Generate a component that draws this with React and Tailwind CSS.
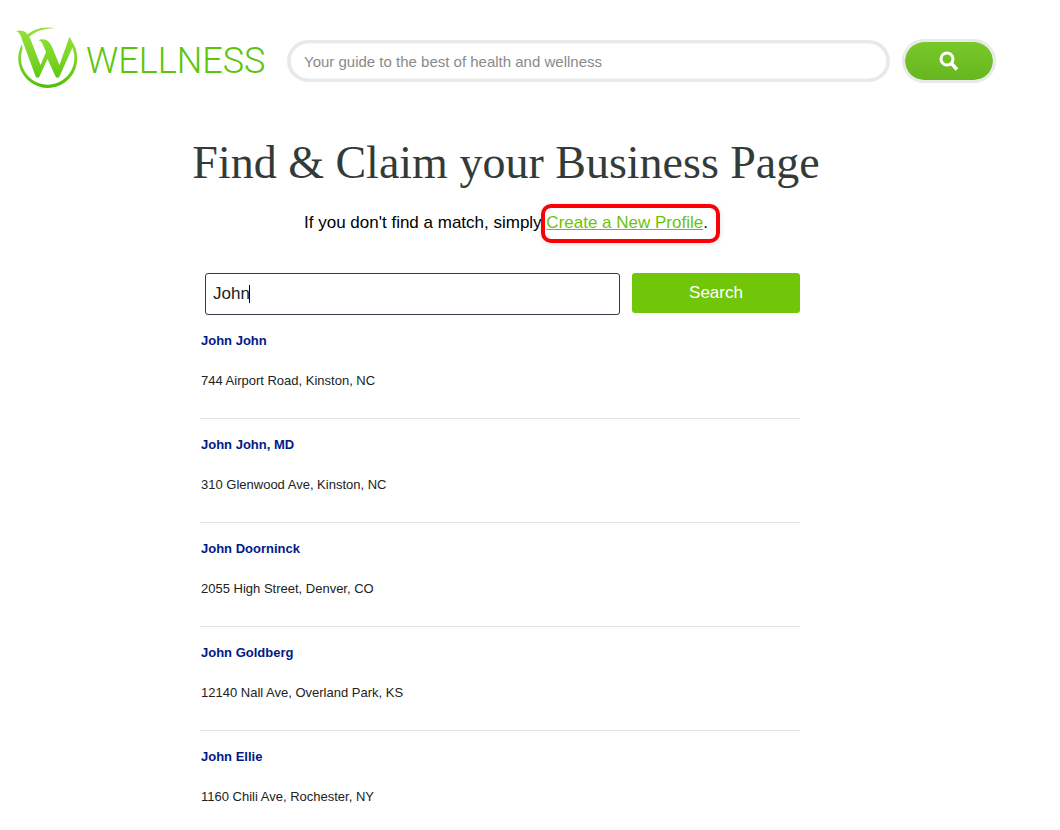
import React, { useState } from "react";

const businesses = [
  { id: 1, name: "John John", address: "744 Airport Road, Kinston, NC" },
  { id: 2, name: "John John, MD", address: "310 Glenwood Ave, Kinston, NC" },
  { id: 3, name: "John Doorninck", address: "2055 High Street, Denver, CO" },
  { id: 4, name: "John Goldberg", address: "12140 Nall Ave, Overland Park, KS" },
  { id: 5, name: "John Ellie", address: "1160 Chili Ave, Rochester, NY" },
];

function Logo() {
  return (
    <a href="#" className="flex w-[247px] shrink-0 items-center gap-2 text-[#5cc50a]">
      <svg className="h-[62px] w-[62px] shrink-0" viewBox="0 0 62 62" aria-hidden="true">
        <defs>
          <linearGradient id="leaf" gradientUnits="userSpaceOnUse" x1="0" y1="0" x2="0" y2="62">
            <stop offset="0" stopColor="#95e23c" />
            <stop offset="0.5" stopColor="#7cd628" />
            <stop offset="1" stopColor="#52bf08" />
          </linearGradient>
        </defs>
        <g fill="url(#leaf)">
          {/* thin stroke over the top, then the thicker ring below */}
          <path d="M11 9 C18 3 28 0 39 2.5 C29 2 20 4.500 13 11 Z" />
          <path d="M6 18 A29.5 29.5 0 1 0 54 13 L56 21 A26.7 26.7 0 1 1 6.5 23 Z" />
          <path d="M0 5 C7 3 11 6 14 12 L24.5 39 L30 26 L27 19 C26 16 24.5 14.5 22.3 14.3 C29 11.5 33.5 15 36.5 22 L43.5 39 L53.3 11 C55.5 14 57.5 18 56 22.5 L43 51.5 H40 L31.5 33 L23 51.5 H20 L6.5 15 C5 9 3 6 0 5 Z" />
        </g>
      </svg>
      <span className="pt-2 font-[Roboto,sans-serif] text-[36px] leading-10 font-light">WELLNESS</span>
    </a>
  );
}

function SiteSearch() {
  return (
    <form className="flex flex-1 items-center gap-3 pt-2" onSubmit={(e) => e.preventDefault()}>
      <input
        type="text"
        name="q"
        aria-label="Search the site"
        placeholder="Your guide to the best of health and wellness"
        className="h-[42px] min-w-0 flex-1 rounded-full border-3 border-[#e9e9e9] px-[14px] text-[15px] shadow-[inset_0_0_1px_#999] outline-none placeholder:text-[#8a8a8a]"
      />
      <button
        type="submit"
        aria-label="Search"
        className="flex h-11 w-[94px] items-center justify-center rounded-full border-3 border-[#e9e9e9] bg-linear-to-b from-[#78c92a] to-[#66b61f] bg-clip-padding text-white"
      >
        <svg className="h-5 w-5" viewBox="0 0 20 20" fill="none" stroke="currentColor" aria-hidden="true">
          <circle cx="8" cy="8" r="6" strokeWidth="3" />
          <path d="M12 12 L18 18.500" strokeWidth="3.500" />
        </svg>
      </button>
    </form>
  );
}

function BusinessRow({ data }) {
  return (
    <li className="flex h-[104px] flex-col gap-5 border-b border-[#e3e3e3] pt-4 pl-px text-[13px] leading-5">
      <a href="#" className="font-bold text-[#001a88]">{data.name}</a>
      <p className="text-[#222]">{data.address}</p>
    </li>
  );
}

export default function App() {
  const [query, setQuery] = useState("John");

  return (
    <div className="bg-white font-['Liberation_Sans',Arial,sans-serif] text-black">
      <header className="flex items-center gap-6 pt-[26px] pr-16 pl-4">
        <Logo />
        <SiteSearch />
      </header>

      <main className="pt-[47px] pr-12">
        <h1 className="text-center font-['Liberation_Serif',serif] text-[46px] leading-[56px] text-[#333b38]">
          Find &amp; Claim your Business Page
        </h1>

        <p className="mt-5 text-center text-[17px] leading-6">
          If you don't find a match, simply{" "}
          <span className="relative inline-block">
            <a href="#" className="text-[#6cc30a] underline">Create a New Profile</a>.
            <span className="pointer-events-none absolute -top-[7px] -right-3 -bottom-2 -left-[5px] rounded-[10px] border-4 border-[#fb0007] shadow-[0_1px_6px_rgba(0,0,0,0.1)]" />
          </span>
        </p>

        <section className="mx-auto max-w-[612px] pr-3">
          <form className="mt-[38px] flex items-start gap-3 pl-[5px]" onSubmit={(e) => e.preventDefault()}>
            <div className="relative min-w-0 flex-1">
              <input
                type="text"
                name="business"
                aria-label="Business name"
                value={query}
                onChange={(e) => setQuery(e.target.value)}
                className="h-[42px] w-full rounded-[3px] border border-[#333947] px-[7px] text-[17px] text-[#222] outline-none"
              />
              {query === "John" && <span className="absolute top-3 left-11 h-[18px] w-px bg-black" />}
            </div>
            <button type="submit" className="h-10 w-[168px] rounded-[3px] bg-[#72c60a] text-[17px] text-white">
              Search
            </button>
          </form>

          <ul>
            {businesses.map((business) => (
              <BusinessRow key={business.id} data={business} />
            ))}
          </ul>
        </section>
      </main>
    </div>
  );
}
